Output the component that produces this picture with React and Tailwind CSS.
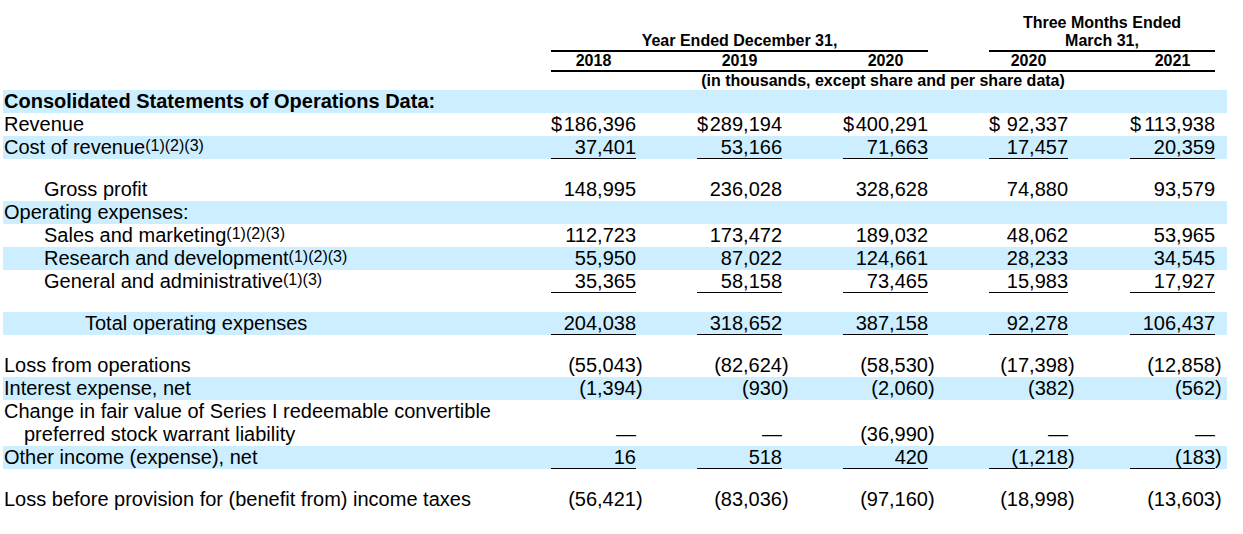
import React from "react";

const cols = [
  { ml: "", w: "w-[85px]" },
  { ml: "ml-[61px]", w: "w-[85px]" },
  { ml: "ml-[61px]", w: "w-[85px]" },
  { ml: "ml-[61px]", w: "w-[79px]" },
  { ml: "ml-[62px]", w: "w-[85px]" },
];

// label, indent, blue, values, underline, superscript
const rows = [
  { label: "Consolidated Statements of Operations Data:", bold: true, blue: true },
  { label: "Revenue", values: ["$186,396", "$289,194", "$400,291", "$92,337", "$113,938"] },
  { label: "Cost of revenue", sup: "(1)(2)(3)", blue: true, line: true, values: ["37,401", "53,166", "71,663", "17,457", "20,359"] },
  { spacer: true },
  { label: "Gross profit", indent: "pl-[41px]", values: ["148,995", "236,028", "328,628", "74,880", "93,579"] },
  { label: "Operating expenses:", blue: true },
  { label: "Sales and marketing", sup: "(1)(2)(3)", indent: "pl-[41px]", values: ["112,723", "173,472", "189,032", "48,062", "53,965"] },
  { label: "Research and development", sup: "(1)(2)(3)", indent: "pl-[41px]", blue: true, values: ["55,950", "87,022", "124,661", "28,233", "34,545"] },
  { label: "General and administrative", sup: "(1)(3)", indent: "pl-[41px]", line: true, values: ["35,365", "58,158", "73,465", "15,983", "17,927"] },
  { spacer: true },
  { label: "Total operating expenses", indent: "pl-[82px]", blue: true, line: true, values: ["204,038", "318,652", "387,158", "92,278", "106,437"] },
  { spacer: true },
  { label: "Loss from operations", values: ["(55,043)", "(82,624)", "(58,530)", "(17,398)", "(12,858)"] },
  { label: "Interest expense, net", blue: true, values: ["(1,394)", "(930)", "(2,060)", "(382)", "(562)"] },
  { label: "Change in fair value of Series I redeemable convertible" },
  { label: "preferred stock warrant liability", indent: "pl-[21px]", values: ["—", "—", "(36,990)", "—", "—"] },
  { label: "Other income (expense), net", blue: true, line: true, values: ["16", "518", "420", "(1,218)", "(183)"] },
  { spacer: true },
  { label: "Loss before provision for (benefit from) income taxes", values: ["(56,421)", "(83,036)", "(97,160)", "(18,998)", "(13,603)"] },
];

function Num({ v, col, line }) {
  const dollar = v.startsWith("$");
  const neg = v.endsWith(")");
  let body = dollar ? v.slice(1) : v;
  if (neg) body = body.slice(0, -1);
  return (
    <div className={`flex shrink-0 ${col.ml}`}>
      <div className={`flex justify-between ${col.w} ${line ? "border-b border-black" : ""}`}>
        <span>{dollar ? "$" : ""}</span>
        <span>{body}</span>
      </div>
      <span className="w-0 overflow-visible">{neg ? ")" : ""}</span>
    </div>
  );
}

const App = () => {
  return (
    <div className="w-[1243px] h-[534px] bg-white text-black font-['Liberation_Sans',Arial,sans-serif] pl-[3px] whitespace-nowrap">
      {/* column headings */}
      <div className="pt-[13px] text-[16px] font-bold">
        <div className="flex">
          <div className="w-[548px] shrink-0" />
          <div className="w-[377px] flex flex-col justify-end border-b-2 border-black">
            <div className="h-[19px] leading-[19px] text-center">Year Ended December 31,</div>
          </div>
          <div className="ml-[61px] w-[226px] border-b-2 border-black text-center">
            <div className="h-[18px] leading-[20px]">Three Months Ended</div>
            <div className="h-[19px] leading-[19px]">March 31,</div>
          </div>
        </div>
        <div className="flex">
          <div className="w-[548px] shrink-0" />
          <div className="flex w-[664px] h-[20px] border-b-2 border-black">
            <div className="w-[85px] text-center leading-[18px]">2018</div>
            <div className="ml-[61px] w-[85px] text-center leading-[18px]">2019</div>
            <div className="ml-[61px] w-[85px] text-center leading-[18px]">2020</div>
            <div className="ml-[61px] w-[79px] text-center leading-[18px]">2020</div>
            <div className="ml-[62px] w-[85px] text-center leading-[18px]">2021</div>
          </div>
        </div>
        <div className="flex h-[18px]">
          <div className="w-[548px] shrink-0" />
          <div className="w-[664px] text-center leading-[17px]">
            (in thousands, except share and per share data)
          </div>
        </div>
      </div>

      {/* statement rows */}
      <div className="w-[1224px] text-[20px]">
        {rows.map((r, i) =>
          r.spacer ? (
            <div key={i} className="h-[19px]" />
          ) : (
            <div
              key={i}
              className={`flex h-[23px] leading-[23px] ${r.blue ? "bg-[#cceeff]" : ""}`}
            >
              <div className={`w-[548px] shrink-0 ${r.indent || "pl-px"} ${r.bold ? "font-bold" : ""}`}>
                {r.label}
                {r.sup && (
                  <span className="text-[16px] leading-none align-[3px]">{r.sup}</span>
                )}
              </div>
              {r.values &&
                r.values.map((v, j) => (
                  <Num key={j} v={v} col={cols[j]} line={r.line} />
                ))}
            </div>
          )
        )}
      </div>
    </div>
  );
};

export default App;
